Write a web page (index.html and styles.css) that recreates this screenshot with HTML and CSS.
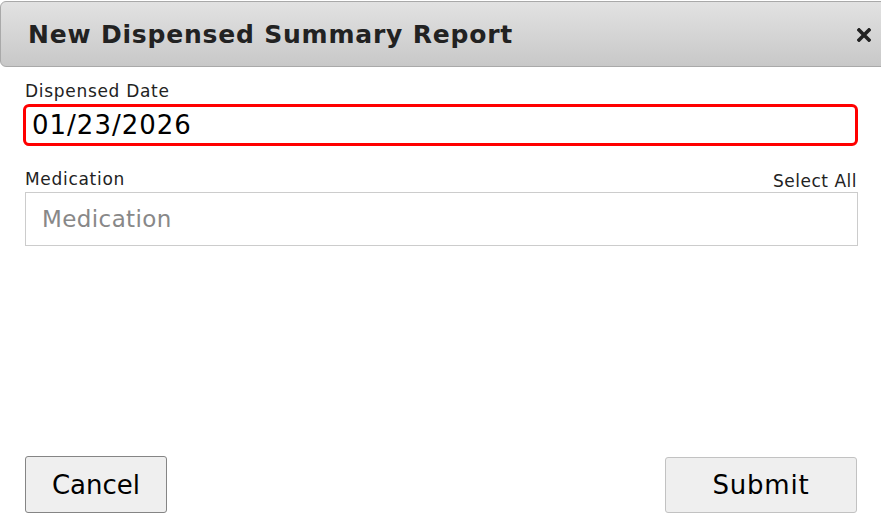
FILE: index.html
```html
<!DOCTYPE html>
<html lang="en">

<head>
    <meta charset="UTF-8">
    <meta name="viewport" content="width=device-width, initial-scale=1.0">
    <title>New Dispensed Summary Report</title>
    <link rel="stylesheet" href="styles.css">
</head>

<body>
    <div class="dialog">
        <div class="dialog-header">
            <h1 class="dialog-title">New Dispensed Summary Report</h1>
            <span class="dialog-close">
                <svg width="14" height="14" viewBox="0 0 14 14">
                    <path d="M2 2 L12 12 M12 2 L2 12" stroke="#222" stroke-width="3.6" stroke-linecap="square" />
                </svg>
            </span>
        </div>

        <div class="dialog-body">
            <div class="field">
                <label class="field-label" for="dispensedDate">Dispensed Date</label>
                <input class="date-input" id="dispensedDate" type="text" value="01/23/2026">
            </div>

            <div class="field">
                <div class="field-row">
                    <label class="field-label" for="medication">Medication</label>
                    <a class="select-all">Select All</a>
                </div>
                <input class="med-input" id="medication" type="text" placeholder="Medication">
            </div>
        </div>

        <div class="dialog-footer">
            <button type="button" class="butn butn-cancel">Cancel</button>
            <button type="button" class="butn butn-submit">Submit</button>
        </div>
    </div>
</body>

</html>
```

FILE: styles.css
```css
        body {
            margin: 0;
            background-color: #ffffff;
            font-family: "DejaVu Sans", Verdana, sans-serif;
            color: #222222;
        }

        .dialog {
            height: 518px;
            display: flex;
            flex-direction: column;
            box-sizing: border-box;
            padding-top: 1px;
        }

        .dialog-header {
            height: 64px;
            margin-right: -10px;
            display: flex;
            align-items: center;
            justify-content: space-between;
            padding: 0 19px 0 27px;
            border: 1px solid #a9a9a9;
            border-radius: 6px 0 0 6px;
            background: linear-gradient(#e2e2e2, #c8c8c8);
        }

        .dialog-title {
            margin: 0;
            font-size: 25px;
            letter-spacing: 0.8px;
            font-weight: bold;
            color: #222222;
        }

        .dialog-close {
            display: flex;
            margin-top: 2px;
        }

        .dialog-body {
            padding: 14px 23px 0 25px;
        }

        .field {
            margin-bottom: 23px;
        }

        .field-label {
            display: block;
            font-size: 17px;
            letter-spacing: 0.7px;
            color: #222222;
        }

        .field-row {
            display: flex;
            justify-content: space-between;
            align-items: flex-end;
        }

        .select-all {
            font-size: 17px;
            letter-spacing: 0.5px;
            color: #222222;
            margin-right: 1px;
            margin-bottom: -2px;
        }

        .date-input {
            display: block;
            box-sizing: border-box;
            height: 42px;
            margin: 3px 0 0 -2px;
            width: calc(100% + 2px);
            padding: 0 6px;
            border: 3px solid #ff0000;
            border-radius: 6px;
            font-family: "DejaVu Sans", Verdana, sans-serif;
            font-size: 26px;
            letter-spacing: 1px;
            color: #000000;
            outline: none;
        }

        .med-input {
            display: block;
            width: 100%;
            box-sizing: border-box;
            height: 54px;
            margin-top: 3px;
            padding: 0 16px;
            border: 1px solid #cccccc;
            font-family: "DejaVu Sans", Verdana, sans-serif;
            font-size: 23px;
            letter-spacing: 0.4px;
            color: #000000;
        }

        .med-input::placeholder {
            color: #888888;
        }

        .dialog-footer {
            margin-top: auto;
            display: flex;
            justify-content: space-between;
            align-items: center;
            padding: 0 24px 5px 25px;
        }

        .butn {
            font-family: "DejaVu Sans", Verdana, sans-serif;
            font-size: 26px;
            color: #000000;
            background: #efefef;
            border-radius: 3px;
        }

        .butn-cancel {
            width: 142px;
            height: 57px;
            border: 1px solid #858585;
        }

        .butn-submit {
            width: 192px;
            height: 56px;
            border: 1px solid #c2c2c2;
            letter-spacing: 0.8px;
        }
```
